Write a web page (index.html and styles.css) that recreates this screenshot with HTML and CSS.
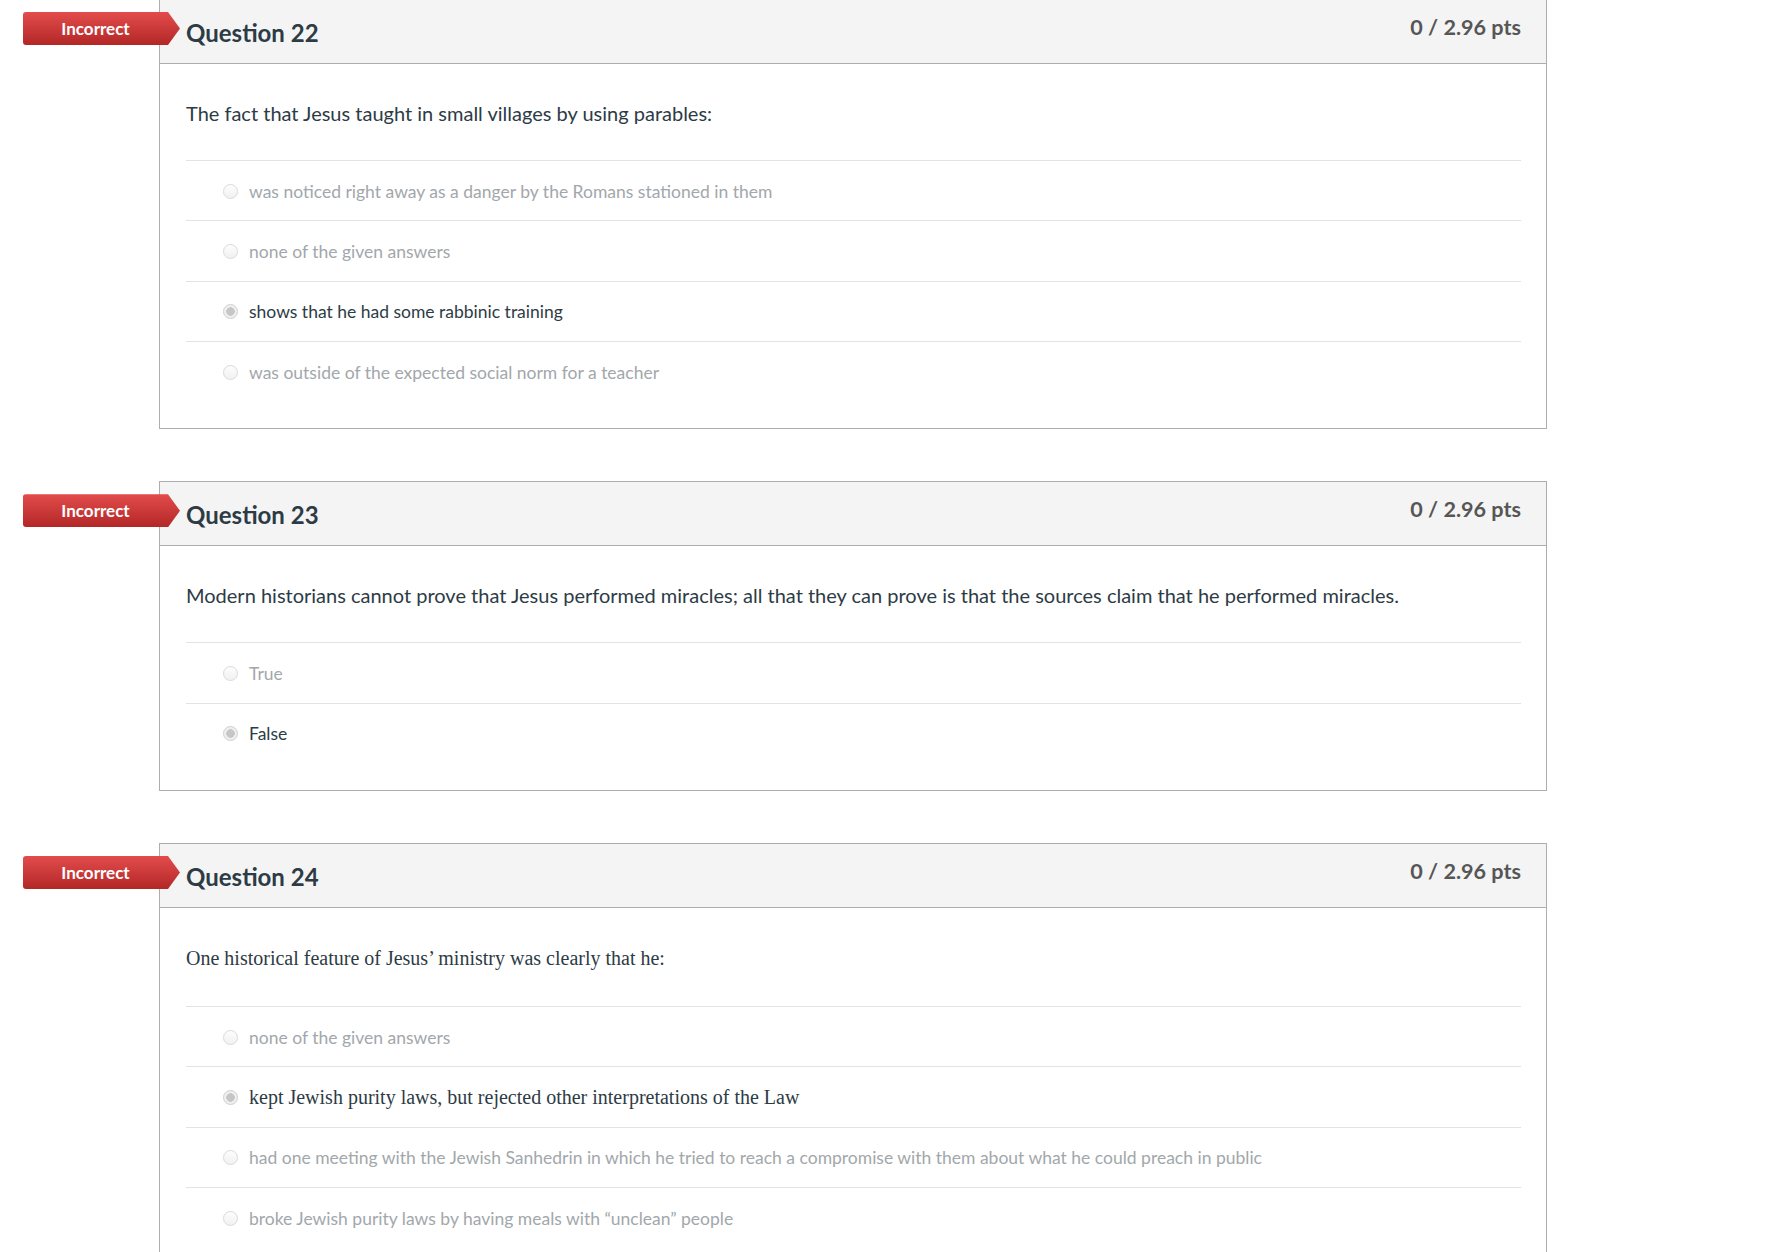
FILE: index.html
```html
<!DOCTYPE html>
<html lang="en">
<head>
  <meta charset="UTF-8" />
  <title>Quiz Results</title>
  <meta name="viewport" content="width=device-width, initial-scale=1.0" />
  <link rel="stylesheet" href="styles.css">
</head>
<body>
  <div class="quiz">

    <div class="question">
      <div class="answer-flag">Incorrect</div>
      <div class="question-header">
        <span class="question-name">Question 22</span>
        <span class="question-points">0 / 2.96 pts</span>
      </div>
      <div class="question-body">
        <p class="question-text">The fact that Jesus taught in small villages by using parables:</p>
        <div class="answers">
          <label class="answer"><input type="radio" disabled /><span>was noticed right away as a danger by the Romans stationed in them</span></label>
          <label class="answer"><input type="radio" disabled /><span>none of the given answers</span></label>
          <label class="answer selected"><input type="radio" disabled checked /><span>shows that he had some rabbinic training</span></label>
          <label class="answer"><input type="radio" disabled /><span>was outside of the expected social norm for a teacher</span></label>
        </div>
      </div>
    </div>

    <div class="question">
      <div class="answer-flag">Incorrect</div>
      <div class="question-header">
        <span class="question-name">Question 23</span>
        <span class="question-points">0 / 2.96 pts</span>
      </div>
      <div class="question-body">
        <p class="question-text">Modern historians cannot prove that Jesus performed miracles; all that they can prove is that the sources claim that he performed miracles.</p>
        <div class="answers">
          <label class="answer"><input type="radio" disabled /><span>True</span></label>
          <label class="answer selected"><input type="radio" disabled checked /><span>False</span></label>
        </div>
      </div>
    </div>

    <div class="question">
      <div class="answer-flag">Incorrect</div>
      <div class="question-header">
        <span class="question-name">Question 24</span>
        <span class="question-points">0 / 2.96 pts</span>
      </div>
      <div class="question-body">
        <p class="question-text serif">One historical feature of Jesus’ ministry was clearly that he:</p>
        <div class="answers">
          <label class="answer"><input type="radio" disabled /><span>none of the given answers</span></label>
          <label class="answer selected"><input type="radio" disabled checked /><span class="serif">kept Jewish purity laws, but rejected other interpretations of the Law</span></label>
          <label class="answer"><input type="radio" disabled /><span>had one meeting with the Jewish Sanhedrin in which he tried to reach a compromise with them about what he could preach in public</span></label>
          <label class="answer"><input type="radio" disabled /><span>broke Jewish purity laws by having meals with “unclean” people</span></label>
        </div>
      </div>
    </div>

  </div>
</body>
</html>
```

FILE: styles.css
```css
body {
  margin: 0;
  padding: 0;
  background: #fff;
  font-family: Lato, "Open Sans", sans-serif;
  color: #2d3b45;
}

.quiz {
  margin-top: -1px;
  padding-left: 159px;
}

.question {
  position: relative;
  width: 1388px;
  box-sizing: border-box;
  border: 1px solid #adadad;
  margin-bottom: 52px;
  background: #fff;
}

/* red "Incorrect" ribbon hanging off the left side */
.answer-flag {
  position: absolute;
  left: -137px;
  top: 12px;
  width: 157px;
  height: 33px;
  padding-right: 12px;
  box-sizing: border-box;
  background: linear-gradient(#e34c4c, #b32727);
  border-radius: 3px 0 0 3px;
  clip-path: polygon(0 0, 145px 0, 157px 50%, 145px 100%, 0 100%);
  color: #fff;
  font-size: 17px;
  font-weight: 700;
  line-height: 33px;
  text-align: center;
}

.question-header {
  display: flex;
  justify-content: space-between;
  align-items: flex-start;
  height: 64px;
  box-sizing: border-box;
  padding: 12px 25px 0 26px;
  background: #f4f4f4;
  border-bottom: 1px solid #adadad;
}

.question-name {
  margin-top: 6px;
  font-size: 24px;
  font-weight: 700;
  line-height: 30px;
  color: #2d3b45;
}

.question-points {
  font-size: 21.6px;
  font-weight: 700;
  line-height: 30px;
  color: #565656;
}

.question-body {
  padding: 34px 25px 27px 26px;
}

.question-text {
  margin: 0 0 32px;
  font-size: 20px;
  line-height: 30px;
}

.serif {
  font-family: "Liberation Serif", "Times New Roman", serif;
}

.question-text.serif {
  padding-top: 1px;
  margin-bottom: 33px;
}

.answer {
  display: flex;
  align-items: center;
  height: 60.33px;
  box-sizing: border-box;
  padding: 1px 0 0 37px;
  border-top: 1px solid #e3e3e3;
  font-size: 17.5px;
  color: #a2a7ab;
}

.answer.selected {
  color: #2d3b45;
}

.answer .serif {
  font-size: 20px;
}

.answer input {
  appearance: none;
  -webkit-appearance: none;
  width: 15px;
  height: 15px;
  margin: 0 11px 0 0;
  border: 1px solid #dadada;
  border-radius: 50%;
  background: linear-gradient(#fdfdfd, #f1f1f1);
  flex-shrink: 0;
}

.answer input:checked {
  border-color: #cfcfcf;
  background: radial-gradient(circle, #c6c6c6 0 4px, #efefef 4.5px);
}
```
